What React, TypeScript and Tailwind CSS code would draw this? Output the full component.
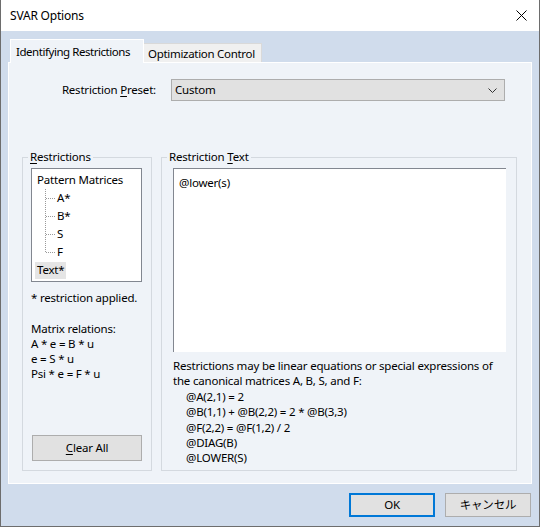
import React from "react";

const font = { fontFamily: '"Noto Sans", "Noto Sans CJK JP", sans-serif' };

function TreeRow({ label, last }: { label: string; last?: boolean }) {
  return (
    <div className="flex items-center h-[18px]">
      <svg width="19" height="18" className="ml-[6px] shrink-0">
        <line x1="7.5" y1="0" x2="7.5" y2={last ? 9 : 18} stroke="#9a9a9a" strokeDasharray="1 1" />
        <line x1="8" y1="9.5" x2="17" y2="9.5" stroke="#9a9a9a" strokeDasharray="1 1" />
      </svg>
      <span>{label}</span>
    </div>
  );
}

export default function App() {
  return (
    <div
      className="w-[540px] h-[527px] flex flex-col border-x border-b border-[#6d6d6d] text-[11.5px] tracking-[-0.2px] text-black overflow-hidden"
      style={font}
    >
      {/* title bar */}
      <div className="h-[31px] bg-white flex items-center justify-between pl-[9px] pr-[12px] shrink-0">
        <span className="text-[12px]">SVAR Options</span>
        <svg width="11" height="11" viewBox="0 0 11 11">
          <path d="M0.5 0.5 L10.5 10.5 M10.5 0.5 L0.5 10.5" stroke="#000" strokeWidth="1" />
        </svg>
      </div>

      {/* body */}
      <div className="flex-1 bg-[#d0dcec] flex flex-col pl-[7px] pr-[7px] pt-[8px]">
        {/* tabs */}
        <div className="flex items-end h-[23px] pl-[2px] relative z-10">
          <div className="h-[24px] -mb-[1px] w-[134px] bg-[#eff3f8] border-t border-l border-r border-white flex items-start pt-[3px] pl-[5px]">
            <span className="whitespace-nowrap tracking-[-0.45px]">Identifying Restrictions</span>
          </div>
          <div className="h-[19px] w-[118px] bg-[#f0f0f0] border-t border-r border-[#d9d9d9] flex items-center pl-[4px] pt-[1px]">
            <span className="whitespace-nowrap tracking-[-0.3px]">Optimization Control</span>
          </div>
        </div>

        {/* panel */}
        <div className="h-[422px] bg-[#eff3f8] border border-white flex flex-col">
          {/* preset row */}
          <div className="flex items-center mt-[16px] h-[22px]">
            <div className="w-[147px] text-right whitespace-nowrap">
              Restriction <u className="underline-offset-2">P</u>reset:
            </div>
            <div className="ml-[15px] w-[334px] h-[22px] bg-[#e1e1e1] border border-[#adadad] flex items-center justify-between pl-[3px] pr-[7px]">
              <span>Custom</span>
              <svg width="9" height="5" viewBox="0 0 9 5">
                <path d="M0.5 0.5 L4.5 4.5 L8.5 0.5" stroke="#333" fill="none" strokeWidth="1" />
              </svg>
            </div>
          </div>

          {/* groups */}
          <div className="flex mt-[48px] ml-[13px] gap-[9px] h-[322px]">
            <fieldset className="w-[130px] h-[322px] border border-[#d4d9df] flex flex-col px-[8px] pb-[9px] min-w-0">
              <legend className="-ml-[3px] px-[2px] leading-[16px]">
                <u className="underline-offset-2">R</u>estrictions
              </legend>
              <div className="mt-[3px] w-[111px] h-[114px] bg-white border border-[#828790] pt-[2px] leading-[16px]">
                <div className="h-[18px] flex items-center pl-[5px] whitespace-nowrap">Pattern Matrices</div>
                <TreeRow label="A*" />
                <TreeRow label="B*" />
                <TreeRow label="S" />
                <TreeRow label="F" last />
                <div className="h-[18px] flex items-center pl-[3px]">
                  <span className="bg-[#e5e5e5] px-[2px] h-[17px] flex items-center">Text*</span>
                </div>
              </div>
              <div className="mt-[8px] leading-[15.3px] whitespace-nowrap">
                <div>* restriction applied.</div>
                <div className="h-[15.3px]" />
                <div>Matrix relations:</div>
                <div>A * e = B * u</div>
                <div>e = S * u</div>
                <div>Psi * e = F * u</div>
              </div>
              <div className="mt-auto ml-[1px] w-[110px] h-[26px] bg-[#e1e1e1] border border-[#adadad] flex items-center justify-center">
                <span>
                  <u className="underline-offset-2">C</u>lear All
                </span>
              </div>
            </fieldset>

            <fieldset className="w-[356px] h-[322px] border border-[#d4d9df] flex flex-col pl-[11px] min-w-0">
              <legend className="-ml-[6px] px-[2px] leading-[16px]">
                Restriction <u className="underline-offset-2">T</u>ext
              </legend>
              <div className="mt-[3px] w-[333px] h-[184px] bg-white border-t border-l border-[#828790] pl-[5px] pt-[5px]">
                @lower(s)
              </div>
              <div className="mt-[6px] leading-[15.4px] whitespace-nowrap">
                <div>Restrictions may be linear equations or special expressions of</div>
                <div>the canonical matrices A, B, S, and F:</div>
                <div className="pl-[13px]">
                  <div>@A(2,1) = 2</div>
                  <div>@B(1,1) + @B(2,2) = 2 * @B(3,3)</div>
                  <div>@F(2,2) = @F(1,2) / 2</div>
                  <div>@DIAG(B)</div>
                  <div>@LOWER(S)</div>
                </div>
              </div>
            </fieldset>
          </div>
        </div>

        {/* buttons */}
        <div className="flex justify-end gap-[10px] mt-[9px] pr-[1px]">
          <div className="w-[86px] h-[24px] bg-[#e1e1e1] border-2 border-[#0078d7] flex items-center justify-center">
            OK
          </div>
          <div className="w-[86px] h-[24px] bg-[#e1e1e1] border border-[#adadad] flex items-center justify-center">
            キャンセル
          </div>
        </div>
      </div>
    </div>
  );
}
